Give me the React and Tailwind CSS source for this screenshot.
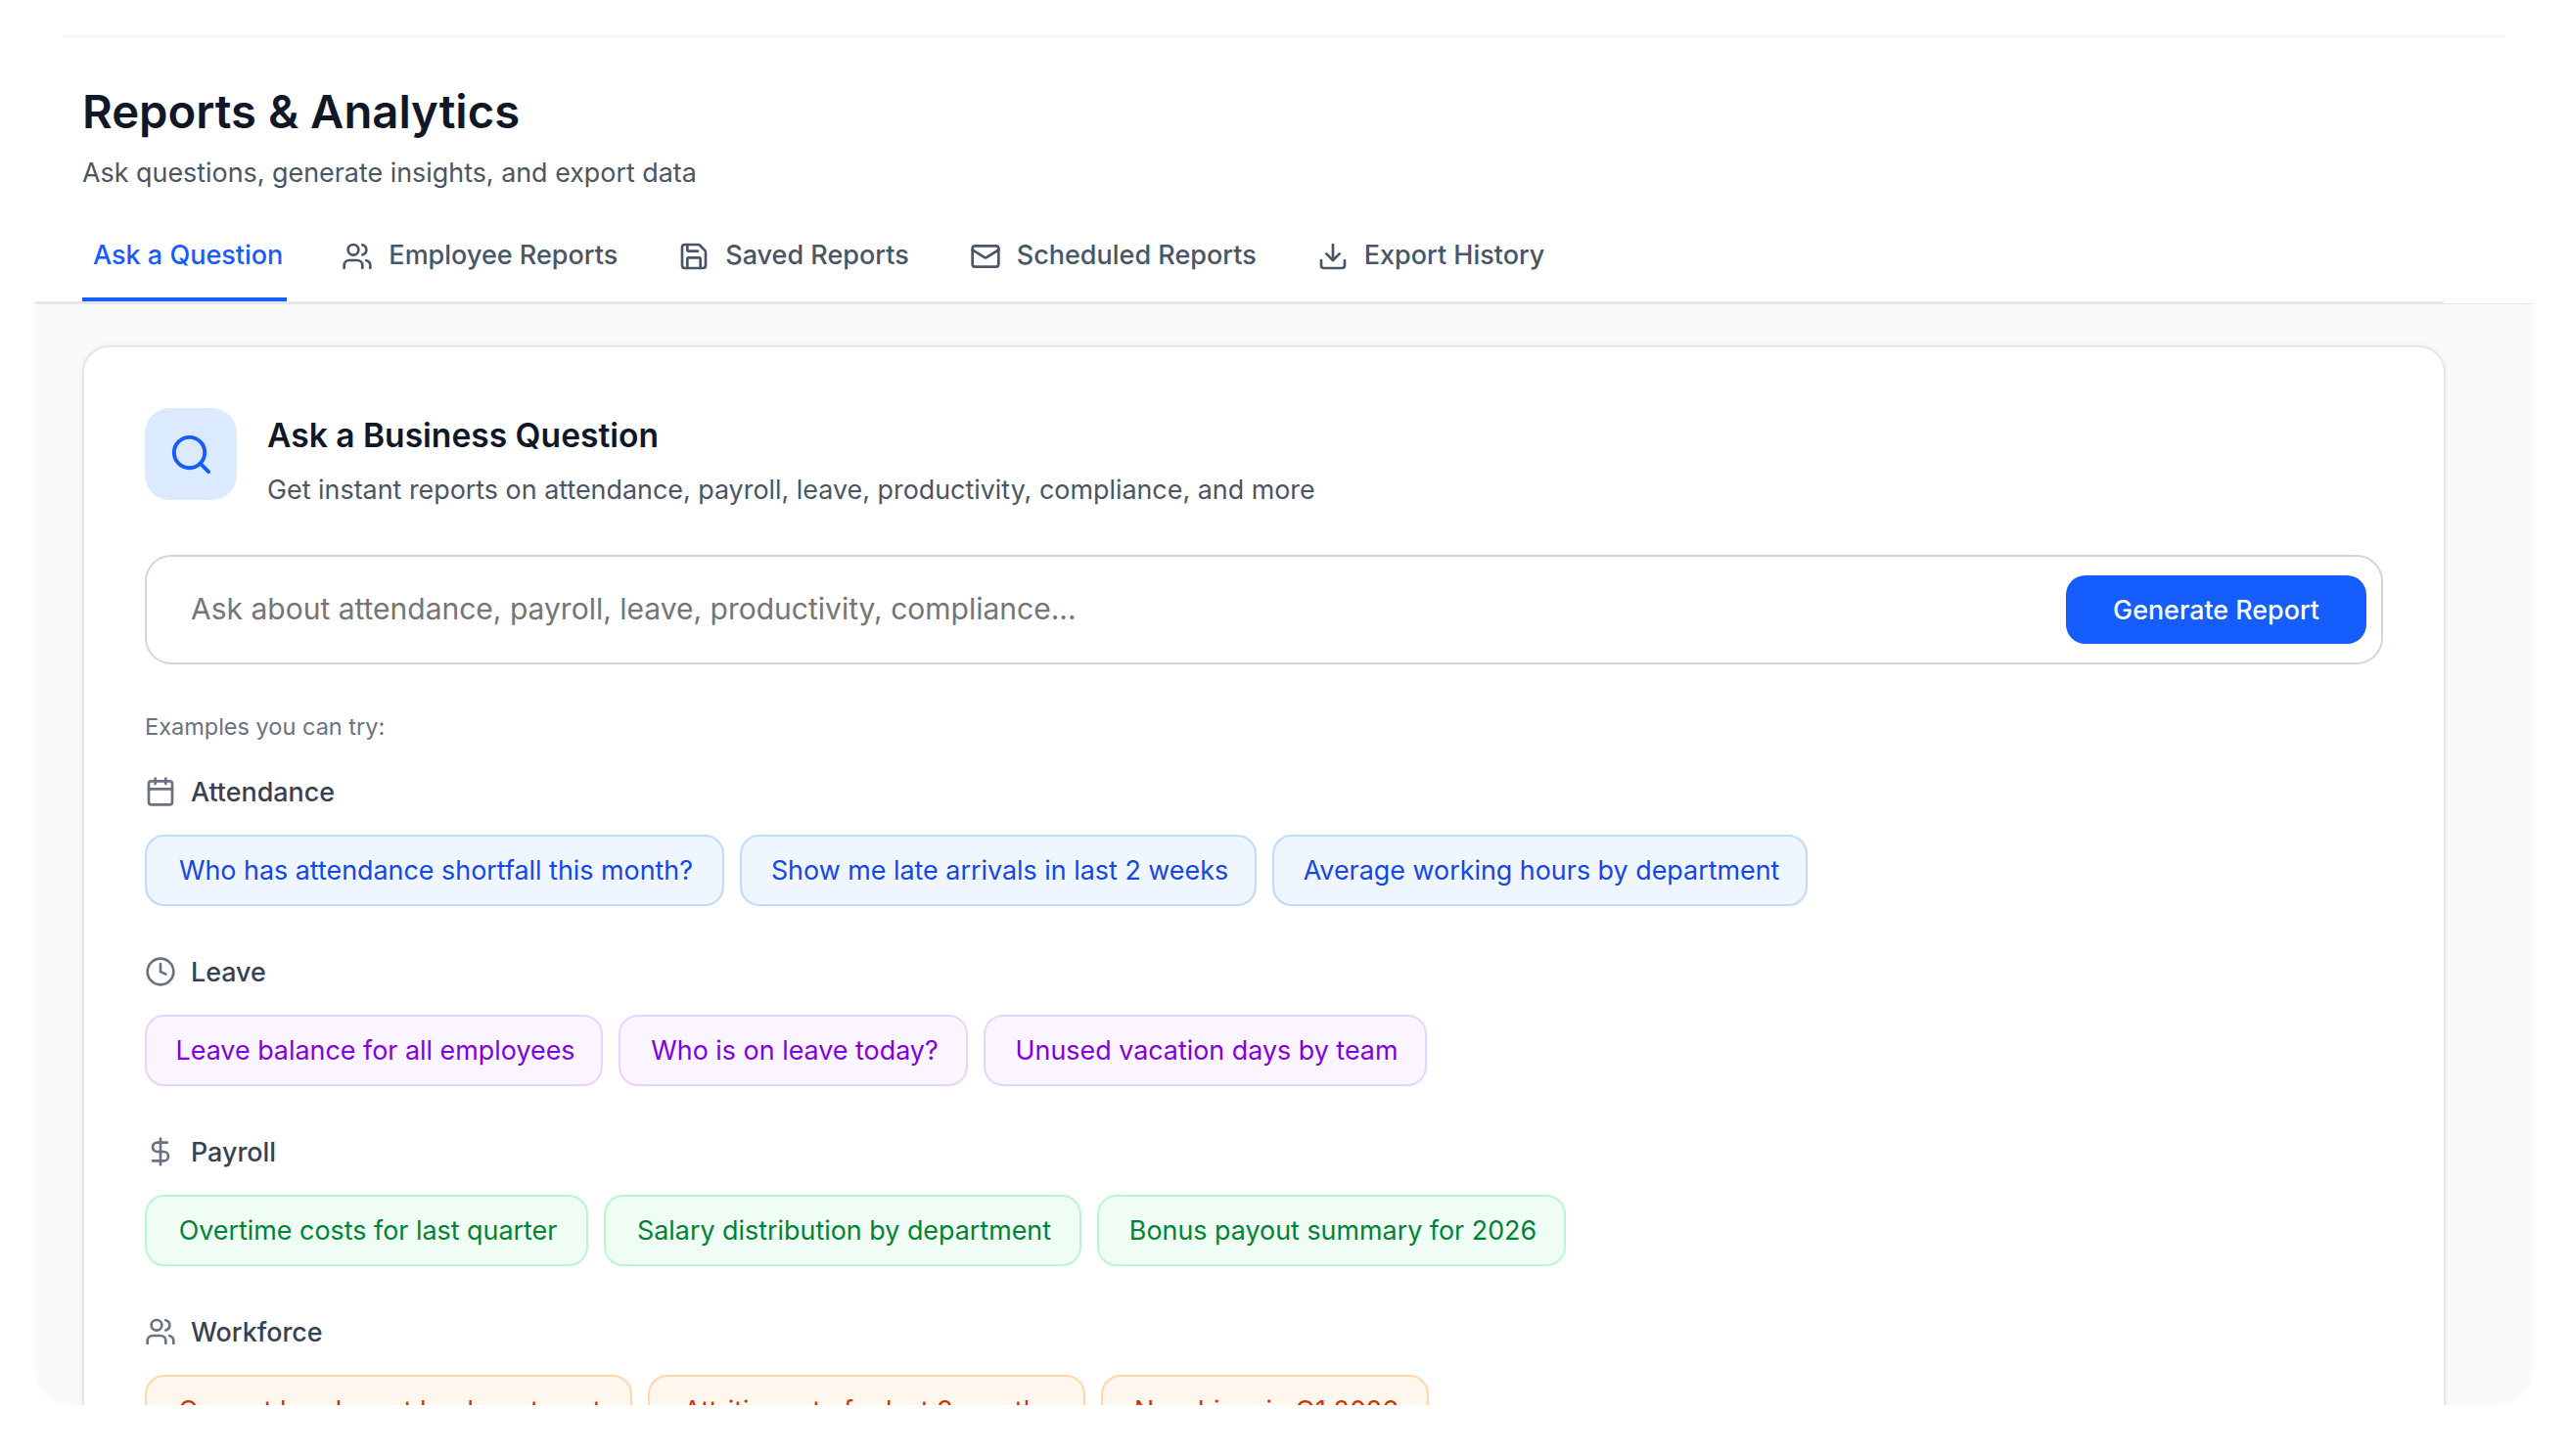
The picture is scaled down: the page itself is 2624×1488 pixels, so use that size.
import React from 'react';
import { Users, Save, Mail, Download, Search, Calendar, Clock, DollarSign } from 'lucide-react';

const tabs = [
  { label: 'Ask a Question', active: true },
  { label: 'Employee Reports', icon: Users },
  { label: 'Saved Reports', icon: Save },
  { label: 'Scheduled Reports', icon: Mail },
  { label: 'Export History', icon: Download },
];

const groups = [
  {
    title: 'Attendance',
    icon: Calendar,
    pill: 'bg-blue-50 border-blue-200 text-blue-700',
    items: [
      { text: 'Who has attendance shortfall this month?', w: 'w-[592px]' },
      { text: 'Show me late arrivals in last 2 weeks', w: 'w-[528px]' },
      { text: 'Average working hours by department', w: 'w-[547px]' },
    ],
  },
  {
    title: 'Leave',
    icon: Clock,
    pill: 'bg-purple-50 border-purple-200 text-purple-700',
    items: [
      { text: 'Leave balance for all employees', w: 'w-[468px]' },
      { text: 'Who is on leave today?', w: 'w-[357px]' },
      { text: 'Unused vacation days by team', w: 'w-[453px]' },
    ],
  },
  {
    title: 'Payroll',
    icon: DollarSign,
    pill: 'bg-green-50 border-green-200 text-green-700',
    items: [
      { text: 'Overtime costs for last quarter', w: 'w-[453px]' },
      { text: 'Salary distribution by department', w: 'w-[488px]' },
      { text: 'Bonus payout summary for 2026', w: 'w-[479px]' },
    ],
  },
  {
    title: 'Workforce',
    icon: Users,
    pill: 'bg-orange-50 border-orange-200 text-orange-700',
    items: [
      { text: 'Current headcount by department', w: 'w-[498px]' },
      { text: 'Attrition rate for last 3 months', w: 'w-[447px]' },
      { text: 'New hires in Q1 2026', w: 'w-[335px]' },
    ],
  },
];

export default function App() {
  return (
    <div className="h-[1488px] overflow-hidden bg-white pt-[36px] font-['Inter',sans-serif]">
      <div className="mx-[64px] h-[2px] bg-gray-100" />

      <div className="mx-[36px] flex h-[1398px] flex-col overflow-hidden rounded-b-[36px]">
        <div className="px-[48px] pt-[44px]">
          <h1 className="text-[47.2px] font-semibold leading-[64px] text-gray-900">Reports &amp; Analytics</h1>
          <p className="mt-[10px] text-[26.88px] leading-[40px] text-gray-600">Ask questions, generate insights, and export data</p>
        </div>

        <div className="mr-[91px] mt-[29px] border-b-[2px] border-gray-200 pl-[48px]">
          <div className="flex gap-[45px]">
            {tabs.map((t) => (
              <div
                key={t.label}
                className={`flex h-[83px] items-center gap-[16px] border-b-[4px] pb-[6px] pl-[11px] text-[27px] font-medium ${
                  t.active ? 'border-blue-600 pr-[4px] text-blue-600' : 'border-transparent pr-[6px] text-gray-600'
                }`}
              >
                {t.icon && <t.icon size={32} />}
                {t.label}
              </div>
            ))}
          </div>
        </div>

        <div className="flex-1 overflow-hidden border-t border-gray-200 bg-gray-50 px-[48px] pt-[42px]">
          <div className="w-[2415px] rounded-[28px] border-[2px] border-gray-200 bg-white p-[62px] shadow-[0_0_5px_rgba(0,0,0,0.08)]">
            <div className="flex gap-[31px]">
              <div className="flex h-[94px] w-[94px] items-center justify-center rounded-[26px] bg-blue-100">
                <Search size={47} className="text-blue-600" />
              </div>
              <div className="pt-[2px]">
                <h2 className="text-[33.6px] font-semibold leading-[52px] text-gray-900">Ask a Business Question</h2>
                <p className="mt-[9px] text-[26.88px] leading-[40px] text-gray-600">
                  Get instant reports on attendance, payroll, leave, productivity, compliance, and more
                </p>
              </div>
            </div>

            <div className="mt-[47px] flex h-[112px] items-center justify-between rounded-[27px] border-[2px] border-gray-300 pl-[45px] pr-[15px]">
              <span className="pb-[2px] text-[30px] text-[#757575]">Ask about attendance, payroll, leave, productivity, compliance...</span>
              <button className="h-[70px] w-[307px] rounded-[20px] bg-blue-600 text-[26.88px] font-medium text-white">Generate Report</button>
            </div>

            <p className="mt-[46px] text-[23.52px] leading-[36px] text-gray-500">Examples you can try:</p>

            <div className="mt-[30px] flex flex-col gap-[49px]">
              {groups.map((g) => (
                <div key={g.title}>
                  <div className="flex h-[36px] items-center gap-[15px]">
                    <g.icon size={32} className="text-gray-500" />
                    <span className="text-[26.88px] font-medium text-gray-700">{g.title}</span>
                  </div>
                  <div className="mt-[26px] flex gap-[16px]">
                    {g.items.map((item) => (
                      <div key={item.text} className={`flex h-[73px] items-center justify-center rounded-[20px] border-[2px] pl-[3px] text-[26.88px] ${item.w} ${g.pill}`}>
                        {item.text}
                      </div>
                    ))}
                  </div>
                </div>
              ))}
            </div>
          </div>
        </div>
      </div>
    </div>
  );
}
